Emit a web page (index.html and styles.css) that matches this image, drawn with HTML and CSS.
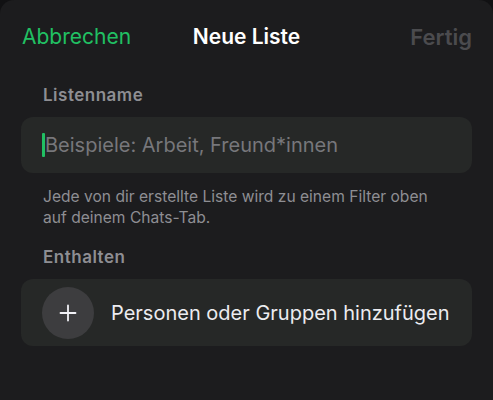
FILE: index.html
```html
<!DOCTYPE html>
<html lang="de">
<head>
    <meta charset="UTF-8">
    <meta name="viewport" content="width=device-width, initial-scale=1.0">
    <title>Neue Liste</title>
    <link rel="stylesheet" href="styles.css">
</head>
<body>

    <div class="sheet">
        <!-- Navigation -->
        <header class="nav-bar">
            <span class="nav-cancel">Abbrechen</span>
            <h1 class="nav-title">Neue Liste</h1>
            <span class="nav-done">Fertig</span>
        </header>

        <!-- List name -->
        <section class="group">
            <h2 class="group-label">Listenname</h2>
            <div class="card name-field">
                <span class="caret"></span>
                <span class="placeholder">Beispiele: Arbeit, Freund*innen</span>
            </div>
            <p class="group-hint">Jede von dir erstellte Liste wird zu einem Filter oben auf deinem Chats-Tab.</p>
        </section>

        <!-- Members -->
        <section class="group">
            <h2 class="group-label">Enthalten</h2>
            <div class="card add-row">
                <span class="add-icon">
                    <svg width="18" height="18" viewBox="0 0 18 18">
                        <path d="M9 1.5v15M1.5 9h15" stroke="#f2f2f7" stroke-width="1.8" stroke-linecap="round" fill="none"/>
                    </svg>
                </span>
                <span class="add-text">Personen oder Gruppen hinzufügen</span>
            </div>
        </section>
    </div>

</body>
</html>
```

FILE: styles.css
```css
html, body {
    margin: 0;
    height: 100%;
    background-color: #111113;
}

body {
    font-family: Inter, "Liberation Sans", sans-serif;
    color: #f2f2f7;
}

.sheet {
    min-height: 100%;
    background-color: #1c1c1e;
    border-radius: 14px 14px 0 0;
    padding: 0 21px 0 21px;
    box-sizing: border-box;
}

.nav-bar {
    display: grid;
    grid-template-columns: 1fr auto 1fr;
    align-items: center;
    height: 76px;
    padding-bottom: 3px;
    box-sizing: border-box;
}

.nav-cancel {
    color: #21c063;
    font-size: 21px;
    margin-left: 1px;
}

.nav-title {
    margin: 0;
    font-size: 21px;
    font-weight: 600;
    color: #ffffff;
}

.nav-done {
    justify-self: end;
    color: #4b4b4e;
    font-size: 22px;
    font-weight: 600;
}

.group-label {
    margin: 9px 0 12px 22px;
    font-size: 17px;
    line-height: 20px;
    letter-spacing: 0.5px;
    font-weight: 600;
    color: #8e8e93;
}

.card {
    background-color: #262827;
    border-radius: 12px;
}

.name-field {
    display: flex;
    align-items: center;
    height: 56px;
    padding-left: 21px;
}

.caret {
    width: 3px;
    height: 24px;
    background-color: #21c063;
    border-radius: 1px;
}

.placeholder {
    font-size: 20px;
    color: #77777b;
}

.group-hint {
    max-width: 400px;
    margin: 13px 0 0 22px;
    font-size: 15.6px;
    line-height: 21px;
    color: #8e8e93;
}

.group + .group .group-label {
    margin-top: 19px;
}

.add-row {
    display: flex;
    align-items: center;
    height: 67px;
    padding-left: 21px;
}

.add-icon {
    display: flex;
    align-items: center;
    justify-content: center;
    width: 52px;
    height: 52px;
    border-radius: 50%;
    background-color: #3d3d3f;
}

.add-text {
    margin-left: 17px;
    font-size: 20px;
    color: #ececf0;
}
```
